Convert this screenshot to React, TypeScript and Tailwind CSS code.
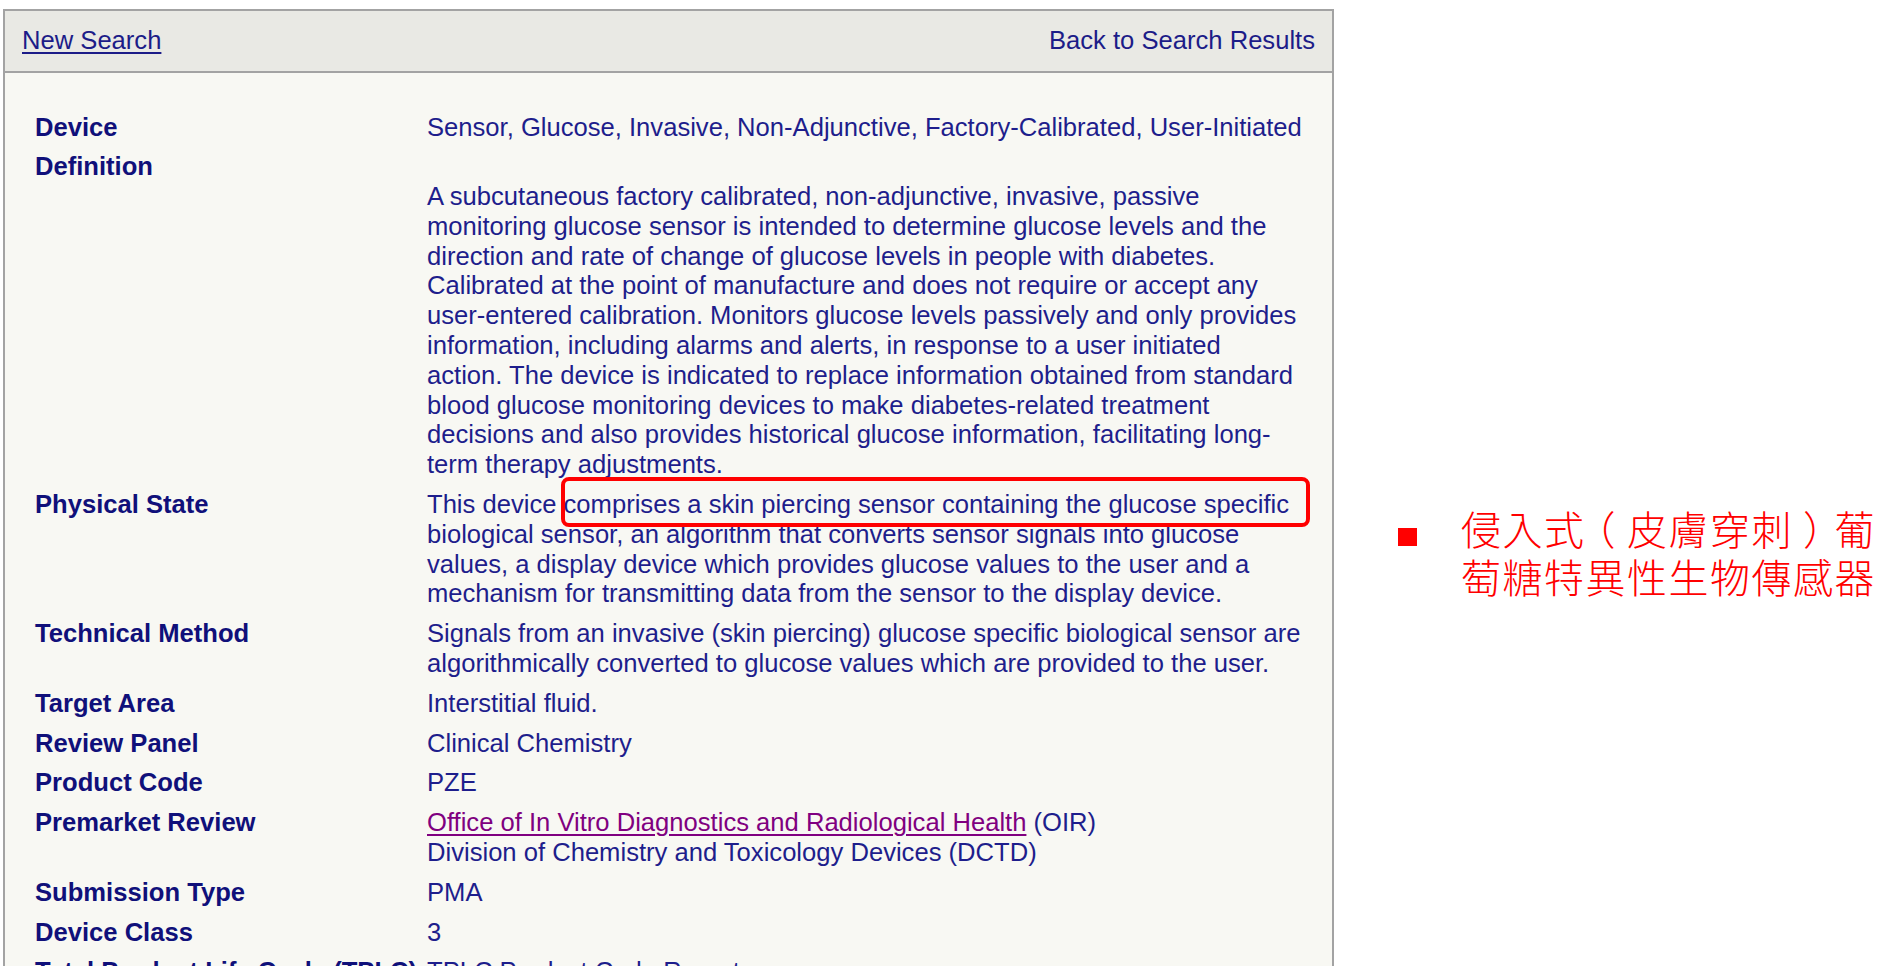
import React from 'react';

interface Row {
  label: string;
  lines: React.ReactNode[];
  blankFirst?: boolean;
  boxed?: boolean;
}

const definition = [
  'A subcutaneous factory calibrated, non-adjunctive, invasive, passive',
  'monitoring glucose sensor is intended to determine glucose levels and the',
  'direction and rate of change of glucose levels in people with diabetes.',
  'Calibrated at the point of manufacture and does not require or accept any',
  'user-entered calibration. Monitors glucose levels passively and only provides',
  'information, including alarms and alerts, in response to a user initiated',
  'action. The device is indicated to replace information obtained from standard',
  'blood glucose monitoring devices to make diabetes-related treatment',
  'decisions and also provides historical glucose information, facilitating long-',
  'term therapy adjustments.',
];

const rows: Row[] = [
  { label: 'Device', lines: ['Sensor, Glucose, Invasive, Non-Adjunctive, Factory-Calibrated, User-Initiated'] },
  { label: 'Definition', lines: definition, blankFirst: true },
  {
    label: 'Physical State',
    boxed: true,
    lines: [
      'This device comprises a skin piercing sensor containing the glucose specific',
      'biological sensor, an algorithm that converts sensor signals into glucose',
      'values, a display device which provides glucose values to the user and a',
      'mechanism for transmitting data from the sensor to the display device.',
    ],
  },
  {
    label: 'Technical Method',
    lines: [
      'Signals from an invasive (skin piercing) glucose specific biological sensor are',
      'algorithmically converted to glucose values which are provided to the user.',
    ],
  },
  { label: 'Target Area', lines: ['Interstitial fluid.'] },
  { label: 'Review Panel', lines: ['Clinical Chemistry'] },
  { label: 'Product Code', lines: ['PZE'] },
  {
    label: 'Premarket Review',
    lines: [
      <>
        <a href="#" className="text-[#800080] underline underline-offset-[3px]">
          Office of In Vitro Diagnostics and Radiological Health
        </a>{' '}
        (OIR)
      </>,
      'Division of Chemistry and Toxicology Devices (DCTD)',
    ],
  },
  { label: 'Submission Type', lines: ['PMA'] },
  { label: 'Device Class', lines: ['3'] },
  { label: 'Total Product Life Cycle (TPLC)', lines: ['TPLC Product Code Report'] },
];

const App: React.FC = () => {
  return (
    <div className="w-[1902px] h-[966px] overflow-hidden bg-white flex items-start font-['Liberation_Sans',Arial,sans-serif]">
      {/* record panel */}
      <div className="ml-[3px] mt-[9px] w-[1331px] h-[1100px] shrink-0 border-2 border-[#a3a3a3] bg-[#f8f8f3]">
        <div className="h-[62px] flex items-center justify-between pl-[17px] pr-[17px] pb-[2px] bg-[#e9e9e4] border-b-2 border-[#a3a3a3] text-[25.6px] text-[#1c1c88]">
          <a href="#" className="underline underline-offset-[3px]">New Search</a>
          <span>Back to Search Results</span>
        </div>

        <div className="pt-[39.5px] pl-[30px] grid grid-cols-[392px_1fr] gap-y-[10px] text-[25.6px] leading-[29.8px]">
          {rows.map((row) => (
            <React.Fragment key={row.label}>
              <div className="font-bold text-[#10107a] whitespace-nowrap">{row.label}</div>
              <div className={`relative text-[#1e1e8c] whitespace-nowrap ${row.blankFirst ? 'pt-[29.8px]' : ''}`}>
                {row.lines.map((line, i) => (
                  <div key={i}>{line}</div>
                ))}
                {row.boxed && (
                  <div className="absolute left-[134px] top-[-13px] w-[749px] h-[50px] border-[4px] border-[#ff0000] rounded-[8px]" />
                )}
              </div>
            </React.Fragment>
          ))}
        </div>
      </div>

      {/* annotation */}
      <div className="mt-[504px] ml-[64px] flex items-start">
        <div className="mt-[24px] w-[19px] h-[18px] bg-[#ff0000] shrink-0" />
        <div
          lang="zh-TW"
          className="ml-[44px] text-[40px] leading-[48px] tracking-[1.5px] font-light text-[#ff0000] whitespace-nowrap font-['Noto_Sans_CJK_TC','Noto_Sans_CJK_SC',sans-serif]"
        >
          侵入式<span className="relative left-[-10px]">（</span>皮膚穿刺<span className="relative left-[10px]">）</span>葡
          <br />
          萄糖特異性生物傳感器
        </div>
      </div>
    </div>
  );
};

export default App;
